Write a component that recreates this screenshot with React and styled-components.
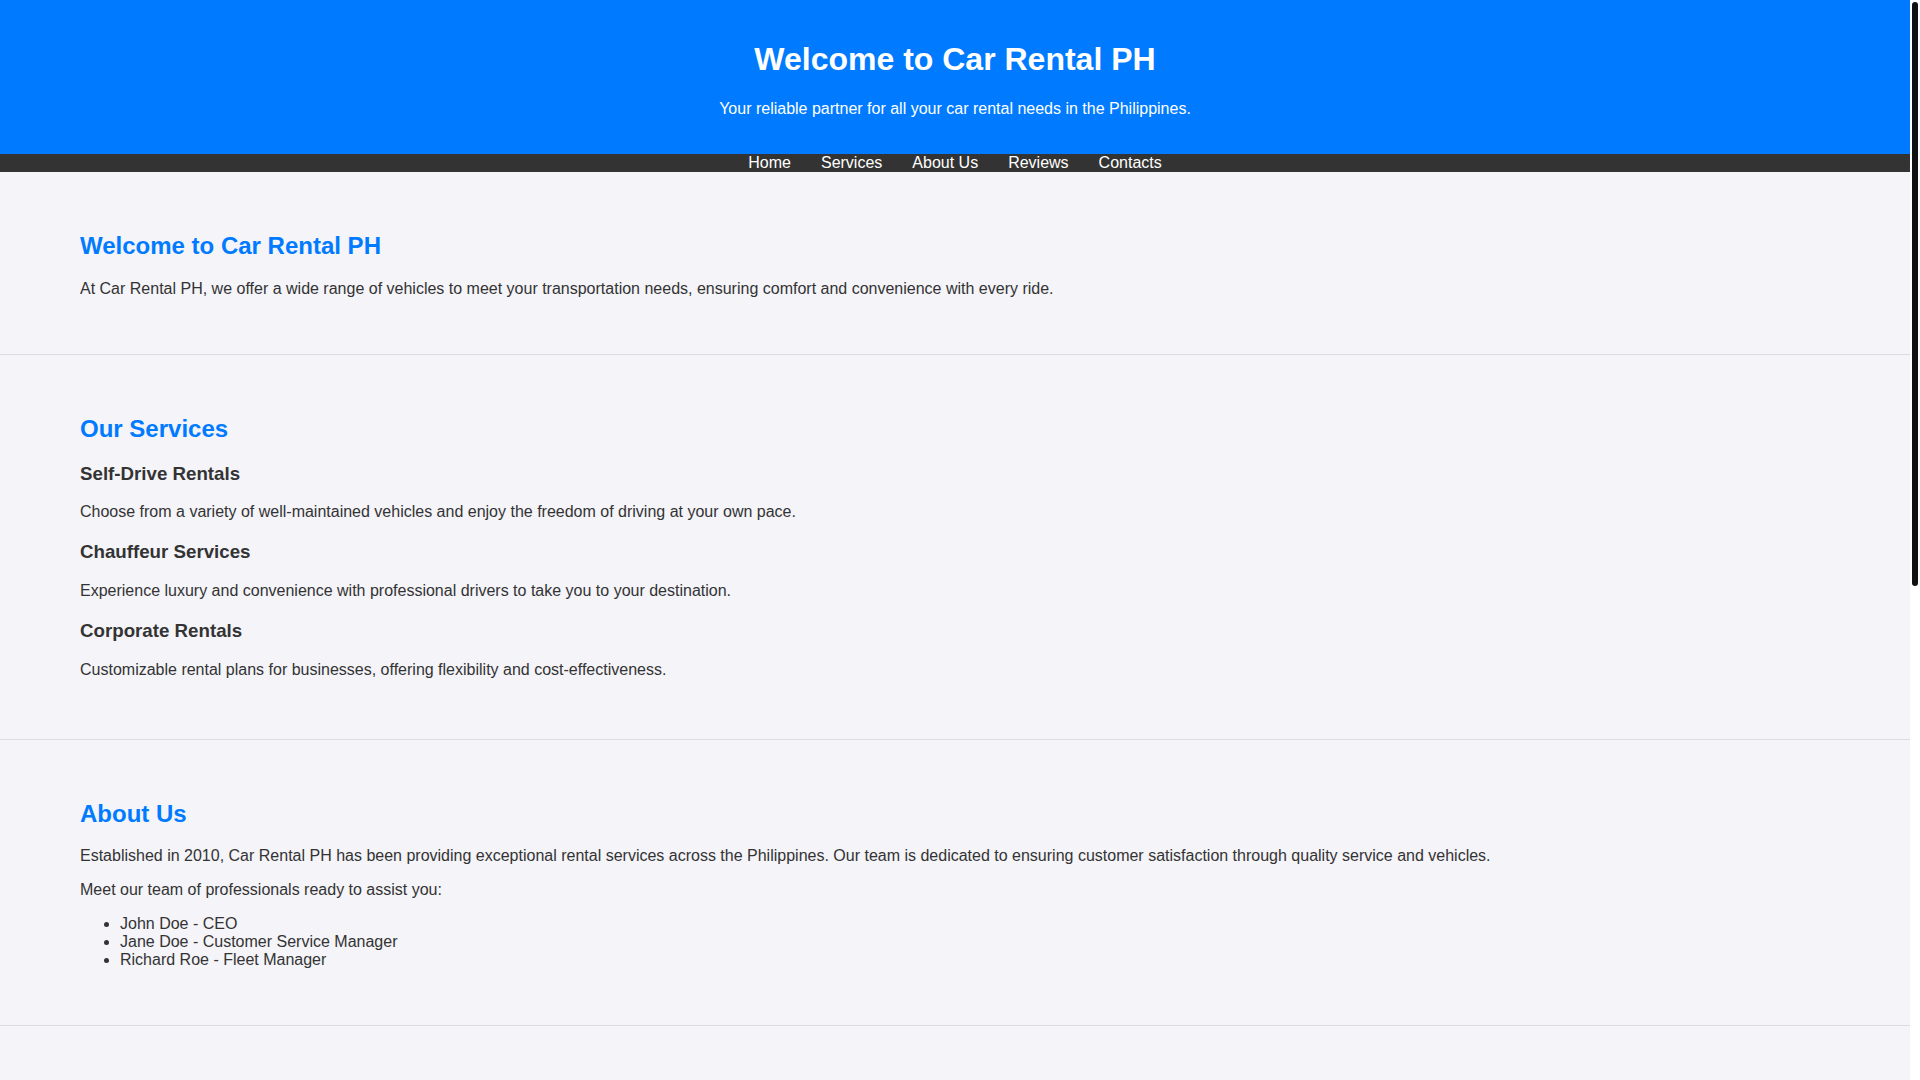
import { useLayoutEffect, useRef, useState } from "react";
import styled, { createGlobalStyle } from "styled-components";

const GlobalStyle = createGlobalStyle`
  html, body {
    margin: 0;
    height: 100%;
    overflow: hidden;
  }

  body {
    font-family: "Liberation Sans", Arial, Helvetica, sans-serif;
    background: #f4f4f9;
    color: #333;
  }
`

const Page = styled.div`
  display: flex;
  height: 100vh;
`

// the page scrolls in here, the native bar is hidden and drawn by Track/Thumb
const Scroller = styled.div`
  flex: 1;
  overflow-y: auto;
  background: #f4f4f9;
  scrollbar-width: none;

  &::-webkit-scrollbar {
    display: none;
  }
`

const Track = styled.div`
  position: relative;
  width: 10px;
  background: #fff;
`

const Thumb = styled.div`
  position: absolute;
  left: 2px;
  right: 2px;
  background: #111;
  border-radius: 3px;
`

const Header = styled.header`
  background: #007bff;
  color: #fff;
  text-align: center;
  padding: 20px 0;
`

const Nav = styled.nav`
  background: #333;
  text-align: center;
`

const NavLink = styled.a`
  color: #fff;
  margin: 0 15px;
  text-decoration: none;
`

const Section = styled.section`
  padding: 40px 80px;
  border-bottom: 1px solid #ddd;

  h2 {
    color: #007bff;
  }
`

const Service = styled.div`
  margin-bottom: 20px;
`

const Review = styled.div`
  margin-bottom: 20px;
`

const Quote = styled.p`
  font-style: italic;
`

const Author = styled.p`
  font-weight: bold;
`

const Form = styled.form`
  display: flex;
  flex-direction: column;
  gap: 10px;
  max-width: 500px;
`

const Input = styled.input`
  padding: 10px;
  border: 1px solid #ccc;
  border-radius: 4px;
  font-family: inherit;
  font-size: 16px;
`

const TextArea = styled.textarea`
  padding: 10px;
  border: 1px solid #ccc;
  border-radius: 4px;
  font-family: inherit;
  font-size: 16px;
  height: 120px;
`

const Submit = styled.button`
  background: #007bff;
  color: #fff;
  border: none;
  padding: 10px;
  border-radius: 4px;
  font-family: inherit;
  font-size: 16px;
  cursor: pointer;
`

const Footer = styled.footer`
  background: #333;
  color: #fff;
  text-align: center;
  padding: 20px 0;

  p {
    margin: 0;
  }
`

const services = [
  { title: "Self-Drive Rentals", text: "Choose from a variety of well-maintained vehicles and enjoy the freedom of driving at your own pace." },
  { title: "Chauffeur Services", text: "Experience luxury and convenience with professional drivers to take you to your destination." },
  { title: "Corporate Rentals", text: "Customizable rental plans for businesses, offering flexibility and cost-effectiveness." },
]

const reviews = [
  { text: "\"Excellent service! The car was clean and the staff were very accommodating.\"", name: "- Maria Santos" },
  { text: "\"Our chauffeur was on time and very professional. Highly recommended!\"", name: "- Jose Rizal" },
  { text: "\"Affordable rates and a smooth booking process. Will rent again.\"", name: "- Ana Cruz" },
]

function App() {
  const scroller = useRef(null)
  const [thumb, setThumb] = useState({ top: 2, height: 0 })

  function updateThumb() {
    const el = scroller.current
    if (!el) return
    const track = el.clientHeight - 4
    const height = Math.max(20, track * el.clientHeight / el.scrollHeight)
    const maxScroll = el.scrollHeight - el.clientHeight
    const top = 2 + (maxScroll > 0 ? (track - height) * el.scrollTop / maxScroll : 0)
    setThumb({ top, height })
  }

  useLayoutEffect(() => {
    updateThumb()
    window.addEventListener("resize", updateThumb)
    return () => window.removeEventListener("resize", updateThumb)
  }, [])

  return <Page>
    <GlobalStyle />
    <Scroller ref={scroller} onScroll={updateThumb}>
      <Header>
        <h1>Welcome to Car Rental PH</h1>
        <p>Your reliable partner for all your car rental needs in the Philippines.</p>
      </Header>
      <Nav>
        <NavLink href="#home">Home</NavLink>
        <NavLink href="#services">Services</NavLink>
        <NavLink href="#about">About Us</NavLink>
        <NavLink href="#reviews">Reviews</NavLink>
        <NavLink href="#contacts">Contacts</NavLink>
      </Nav>

      <Section id="home">
        <h2>Welcome to Car Rental PH</h2>
        <p>At Car Rental PH, we offer a wide range of vehicles to meet your transportation needs, ensuring comfort and convenience with every ride.</p>
      </Section>

      <Section id="services">
        <h2>Our Services</h2>
        {services.map((s) => (
          <Service key={s.title}>
            <h3>{s.title}</h3>
            <p>{s.text}</p>
          </Service>
        ))}
      </Section>

      <Section id="about">
        <h2>About Us</h2>
        <p>Established in 2010, Car Rental PH has been providing exceptional rental services across the Philippines. Our team is dedicated to ensuring customer satisfaction through quality service and vehicles.</p>
        <p>Meet our team of professionals ready to assist you:</p>
        <ul>
          <li>John Doe - CEO</li>
          <li>Jane Doe - Customer Service Manager</li>
          <li>Richard Roe - Fleet Manager</li>
        </ul>
      </Section>

      <Section id="reviews">
        <h2>Customer Reviews</h2>
        {reviews.map((r) => (
          <Review key={r.name}>
            <Quote>{r.text}</Quote>
            <Author>{r.name}</Author>
          </Review>
        ))}
      </Section>

      <Section id="contacts">
        <h2>Contact Us</h2>
        <p>Phone: +63 912 345 6789</p>
        <p>Email: info@carrentalph.com</p>
        <p>Address: 123 Rizal Avenue, Manila, Philippines</p>
        <Form onSubmit={(e) => e.preventDefault()}>
          <Input type="text" placeholder="Your Name" />
          <Input type="email" placeholder="Your Email" />
          <TextArea placeholder="Your Message" />
          <Submit type="submit">Send Message</Submit>
        </Form>
      </Section>

      <Footer>
        <p>&copy; 2024 Car Rental PH. All rights reserved.</p>
      </Footer>
    </Scroller>
    <Track>
      <Thumb style={{ top: thumb.top, height: thumb.height }} />
    </Track>
  </Page>
}

export default App;
